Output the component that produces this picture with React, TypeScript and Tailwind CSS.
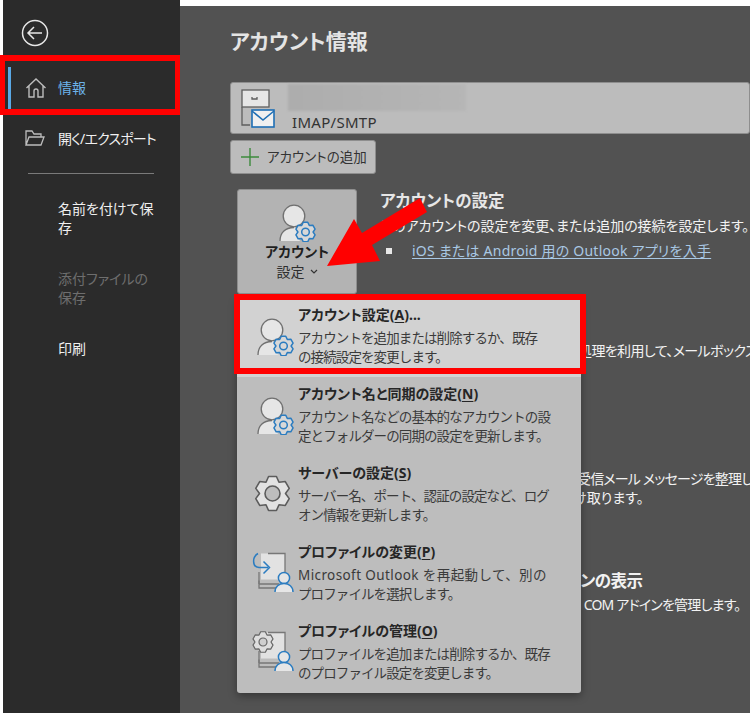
import React from 'react';

const font = 'font-["Noto_Sans","Noto_Sans_CJK_JP",sans-serif] [font-feature-settings:"palt"]';

// outline of a cog wheel, used by all the gear icons
function gearPath(cx: number, cy: number, outer: number, inner: number) {
  const pts: string[] = [];
  for (let i = 0; i < 6; i++) {
    const a = (i * 60 * Math.PI) / 180 + Math.PI / 6;
    const step = [-30, -13, 13, 30];
    const radii = [inner, outer, outer, inner];
    step.forEach((s, k) => {
      const t = a + (s * Math.PI) / 180;
      pts.push(`${(cx + Math.cos(t) * radii[k]).toFixed(2)},${(cy + Math.sin(t) * radii[k]).toFixed(2)}`);
    });
  }
  return 'M' + pts.join('L') + 'Z';
}

function PersonGear() {
  return (
    <svg width="37" height="38" viewBox="0 0 37 38" fill="none">
      <circle cx="15" cy="12" r="10.800" fill="#e6e6e6" stroke="#707070" strokeWidth="1.300" />
      <path d="M1 37c0-8 5-13.500 14-13.500 4 0 7 1 9 3-4 3-5 7-3 10.500z" fill="#e6e6e6" />
      <path d="M1 37c0-8 5-13.500 14-13.500" stroke="#707070" strokeWidth="1.300" />
      <path d={gearPath(26.500, 28, 10, 7.600)} fill="#d8d8d8" stroke="#2b7cc0" strokeWidth="1.500" strokeLinejoin="round" />
      <circle cx="26.500" cy="28" r="3.800" stroke="#2b7cc0" strokeWidth="1.500" />
    </svg>
  );
}

function BigGear() {
  return (
    <svg width="37" height="37" viewBox="0 0 37 37" fill="none">
      <path d={gearPath(18.500, 18.500, 17.500, 13)} fill="#e2e2e2" stroke="#5c5c5c" strokeWidth="1.600" strokeLinejoin="round" />
      <circle cx="18.500" cy="18.500" r="7.500" fill="#bdbdbd" stroke="#5c5c5c" strokeWidth="1.600" />
    </svg>
  );
}

function ProfileBook() {
  return (
    <>
      <path d="M9 1.500h24v26H9z" fill="#e2e2e2" />
      <path d="M7 28.500v7.500h20M7 32h20" stroke="#777" strokeWidth="1.300" />
      <path d="M7 20v12" stroke="#777" strokeWidth="1.300" />
      <path d="M33 20V1.500H16" stroke="#777" strokeWidth="1.300" />
      <circle cx="32" cy="26" r="5.600" fill="#e6e6e6" stroke="#2b7cc0" strokeWidth="1.500" />
      <path d="M23 40c0-5.500 4-8.500 9-8.500s9 3 9 8.500" fill="#e6e6e6" stroke="#2b7cc0" strokeWidth="1.500" />
    </>
  );
}

function ProfileSwitch() {
  return (
    <svg width="42" height="41" viewBox="0 0 42 41" fill="none">
      <ProfileBook />
      <path d="M6 1.500C0 5 0 15 7 15.500h9" stroke="#2b7cc0" strokeWidth="1.500" />
      <path d="M11.500 9.500l6 6-6 6" stroke="#2b7cc0" strokeWidth="1.500" />
    </svg>
  );
}

function ProfileGear() {
  return (
    <svg width="42" height="41" viewBox="0 0 42 41" fill="none">
      <ProfileBook />
      <path d={gearPath(11, 11, 10.500, 8)} fill="#dedede" stroke="#666" strokeWidth="1.200" strokeLinejoin="round" />
      <circle cx="11" cy="11" r="4" fill="#cfcfcf" stroke="#666" strokeWidth="1.200" />
    </svg>
  );
}

const menuRows = [
  { title: 'アカウント設定(', key: 'A', end: ')...', lines: ['アカウントを追加または削除するか、既存', 'の接続設定を変更します。'], icon: <PersonGear />, iconClass: 'ml-[20px] mt-[20px]', active: true },
  { title: 'アカウント名と同期の設定(', key: 'N', end: ')', lines: ['アカウント名などの基本的なアカウントの設', '定とフォルダーの同期の設定を更新します。'], icon: <PersonGear />, iconClass: 'ml-[20px] mt-[20px]' },
  { title: 'サーバーの設定(', key: 'S', end: ')', lines: ['サーバー名、ポート、認証の設定など、ログ', 'オン情報を更新します。'], icon: <BigGear />, iconClass: 'ml-[17px] mt-[19px]' },
  { title: 'プロファイルの変更(', key: 'P', end: ')', lines: ['Microsoft Outlook を再起動して、別の', 'プロファイルを選択します。'], icon: <ProfileSwitch />, iconClass: 'ml-[15px] mt-[17px]', firstLine: 'tracking-[0.4px]' },
  { title: 'プロファイルの管理(', key: 'O', end: ')', lines: ['プロファイルを追加または削除するか、既存', 'のプロファイル設定を変更します。'], icon: <ProfileGear />, iconClass: 'ml-[15px] mt-[17px]' },
];

export default function App() {
  return (
    <div className={`${font} relative flex h-[713px] w-[750px] overflow-hidden bg-white text-[14px]`}>
      {/* sidebar */}
      <div className="ml-[3px] flex w-[177px] shrink-0 flex-col bg-[#2b2b2b] text-[#f0f0f0]">
        <div className="pl-[18px] pt-[19px]">
          <svg width="28" height="28" viewBox="0 0 28 28" fill="none" stroke="#e8e8e8" strokeWidth="1.500">
            <circle cx="14" cy="14" r="12.500" />
            <path d="M21 14H7.500M13 8l-6 6 6 6" />
          </svg>
        </div>
        <div className="relative mt-[20px] flex h-[42px] items-center">
          <div className="ml-[5px] h-full w-[3px] bg-[#5aa9e6]" />
          <svg className="ml-[14px]" width="22" height="22" viewBox="0 0 22 22" fill="none" stroke="#bdbdbd" strokeWidth="1.400">
            <path d="M1.500 11L11 2l9.500 9M4 9v11h5v-6a2 2 0 0 1 4 0v6h5V9" />
          </svg>
          <span className="ml-[11px] -translate-y-px text-[#6db3ea]">情報</span>
        </div>
        <div className="mt-[17px] flex h-[24px] items-center">
          <svg className="ml-[22px]" width="20" height="16" viewBox="0 0 20 16" fill="none" stroke="#bdbdbd" strokeWidth="1.300">
            <path d="M1 15V1h6l2 3h7v3M1 15l3-8h15l-3 8z" />
          </svg>
          <span className="ml-[13px] whitespace-nowrap tracking-[-0.8px]">開く/エクスポート</span>
        </div>
        <div className="ml-[25px] mt-[23px] h-px w-[126px] bg-[#7a7a7a]" />
        <div className="ml-[55px] mt-[25px] w-[100px] leading-[19px]">名前を付けて保存</div>
        <div className="ml-[55px] mt-[32px] w-[100px] leading-[19px] text-[#6e6e6e]">添付ファイルの保存</div>
        <div className="ml-[55px] mt-[32px] leading-[19px]">印刷</div>
      </div>

      {/* main */}
      <div className="relative mt-[6px] min-w-0 flex-1 overflow-hidden bg-[#525252] pl-[50px] text-[#f2f2f2]">
        <h1 className="mt-[18px] text-[21px] font-bold leading-[34px] text-[#e4e4e4]">アカウント情報</h1>

        <div className="mt-[24px] flex h-[52px] rounded-[3px] border border-[#8e8e8e] bg-[#bcbcbc] text-[#333]">
          <svg className="ml-[8px] mt-[6px] shrink-0" width="36" height="40" viewBox="0 0 36 40" fill="none">
            <rect x="3" y="1" width="27" height="17" fill="#e6e6e6" stroke="#5e5e5e" strokeWidth="1.300" />
            <path d="M3 18v18h8M13 8v2h5V8" stroke="#5e5e5e" strokeWidth="1.300" />
            <rect x="13" y="21" width="22" height="17" fill="#f0f0f0" stroke="#1f6fb5" strokeWidth="1.600" />
            <path d="M13 22l11 9 11-9" stroke="#1f6fb5" strokeWidth="1.600" />
          </svg>
          <div className="ml-[13px] flex flex-col">
            <div className="mt-px h-[27px] w-[178px] bg-gradient-to-r from-[#adadad] to-[#b6b6b6] blur-[1px]" />
            <div className="mt-[1px] pl-[4px] text-[15px] leading-[20px] tracking-[0.3px]">IMAP/SMTP</div>
          </div>
        </div>

        <div className="mt-[6px] flex h-[34px] w-[146px] items-center rounded-[3px] border border-[#8e8e8e] bg-[#bcbcbc] text-[#333]">
          <svg className="ml-[9px]" width="20" height="20" viewBox="0 0 20 20" stroke="#3c8a3c" strokeWidth="1.400">
            <path d="M10 1v18M1 10h18" />
          </svg>
          <span className="ml-[7px] whitespace-nowrap text-[13.500px]">アカウントの追加</span>
        </div>

        <div className="ml-[7px] mt-[15px] flex">
          <div className="flex h-[105px] w-[120px] shrink-0 flex-col items-center rounded-[3px] border border-[#8e8e8e] bg-[#b3b3b3] pt-[14px] text-[#1f1f1f]">
            <PersonGear />
            <div className="mt-[1px] text-[14px] font-bold leading-[18px]">アカウント</div>
            <div className="mt-[1px] flex items-center text-[14px] leading-[19px] text-[#2e2e2e]">
              設定
              <svg className="ml-[5px]" width="8" height="6" viewBox="0 0 8 6" fill="none" stroke="#333" strokeWidth="1.200">
                <path d="M1 1l3 3 3-3" />
              </svg>
            </div>
          </div>
          <div className="ml-[23px] min-w-0 whitespace-nowrap">
            <h2 className="text-[16.500px] font-bold leading-[24px] text-[#e6e6e6]">アカウントの設定</h2>
            <p className="mt-[3px] text-[14px] leading-[20px] tracking-[-0.05px]">このアカウントの設定を変更、または追加の接続を設定します。</p>
            <div className="mt-[5px] flex items-center">
              <span className="ml-[6px] h-[6px] w-[6px] bg-[#e8e8e8]" />
              <a className="ml-[20px] text-[14px] leading-[20px] tracking-[0.23px] text-[#a9c8e4] underline underline-offset-2">
                iOS または Android 用の Outlook アプリを入手
              </a>
            </div>
          </div>
        </div>

        <div className="ml-[150px] mt-[22px] whitespace-nowrap">
          <h2 className="text-[16.500px] font-bold leading-[24px]">メールボックスの設定</h2>
          <p className="mt-[1px] leading-[20px] tracking-[-0.6px]">削除済アイテムを空にしアーカイブ処理を利用して、メールボックスのサイズを管理します。</p>
        </div>
        <div className="ml-[150px] mt-[83px] whitespace-nowrap">
          <h2 className="text-[16.500px] font-bold leading-[24px]">仕分けルールと通知</h2>
          <p className="mt-[1px] leading-[20px] tracking-[-0.8px]">仕分けルールと通知を使用すると、 受信メール メッセージを整理し、</p>
          <p className="leading-[18px]">変更や削除の際に更新情報を受け取ります。</p>
        </div>
        <div className="ml-[150px] mt-[62px] whitespace-nowrap">
          <h2 className="text-[16.500px] font-bold leading-[24px] tracking-[-0.5px]">低速および使用不可のアドインの表示</h2>
          <p className="mt-[2px] leading-[20px] tracking-[-0.8px]">Outlook の動作に影響を与えている COM アドインを管理します。</p>
        </div>

        {/* dropdown */}
        <div className="absolute left-[57px] top-[292px] w-[344px] rounded-[3px] bg-[#bdbdbd] text-[#3a3a3a] shadow-[0_3px_8px_rgba(0,0,0,0.35)]">
          {menuRows.map((row) => (
            <div key={row.key} className={`flex h-[79px] ${row.active ? 'bg-[#d2d2d2]' : ''}`}>
              <div className="w-[61px] shrink-0">
                <div className={row.iconClass}>{row.icon}</div>
              </div>
              <div className="whitespace-nowrap pt-[4px]">
                <div className="text-[14px] font-bold leading-[26px] text-[#262626]">
                  {row.title}
                  <span className="underline underline-offset-2">{row.key}</span>
                  {row.end}
                </div>
                <div className="mt-[1px] text-[13.500px] leading-[19px] tracking-[-0.9px] [font-feature-settings:normal]">
                  {row.lines.map((line, i) => (
                    <div key={line} className={i === 0 ? row.firstLine : undefined}>{line}</div>
                  ))}
                </div>
              </div>
            </div>
          ))}
        </div>
      </div>

      {/* red callouts drawn over the screenshot */}
      <div className="absolute left-0 top-[55px] h-[60px] w-[180px] border-[6px] border-l-[5px] border-r-[5px] border-[#ff0000]" />
      <div className="absolute left-[234px] top-[294px] h-[80px] w-[352px] border-[6px] border-[#ff0000]" />
      <svg className="absolute left-0 top-0" width="750" height="713" viewBox="0 0 750 713">
        <polygon points="327,266 354,219 362,233 420,198 427,212 372,245 380,261" fill="#ff0000" />
      </svg>
    </div>
  );
}
